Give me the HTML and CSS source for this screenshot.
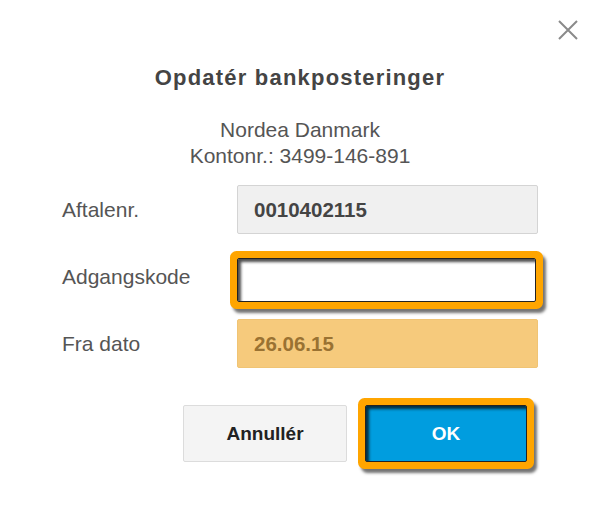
FILE: index.html
```html
<!DOCTYPE html>
<html lang="da">
<head>
    <meta charset="UTF-8">
    <meta name="viewport" content="width=device-width, initial-scale=1.0">
    <title>Opdatér bankposteringer</title>
    <link rel="stylesheet" href="styles.css">
</head>
<body>
    <div class="dialog">
        <div class="dialog-top">
            <button class="close" type="button" aria-label="Luk">
                <svg width="20" height="20" viewBox="0 0 20 20">
                    <path d="M1 1 L19 19 M19 1 L1 19" stroke="#8a8a8a" stroke-width="2" fill="none"/>
                </svg>
            </button>
        </div>

        <h1 class="title">Opdatér bankposteringer</h1>

        <div class="bank">
            <div>Nordea Danmark</div>
            <div>Kontonr.: 3499-146-891</div>
        </div>

        <form class="fields">
            <label for="aftale">Aftalenr.</label>
            <div class="field readonly" id="aftale">0010402115</div>

            <label for="kode">Adgangskode</label>
            <input class="field focus" type="password" id="kode">

            <label for="dato">Fra dato</label>
            <div class="field date" id="dato">26.06.15</div>
        </form>

        <div class="actions">
            <button class="btn cancel" type="button">Annullér</button>
            <button class="btn ok focus" type="button">OK</button>
        </div>
    </div>
</body>
</html>
```

FILE: styles.css
```css
body {
    margin: 0;
    font-family: 'Liberation Sans', Arial, sans-serif;
    background: #fff;
    color: #555;
}

.dialog {
    width: 600px;
    height: 507px;
    box-sizing: border-box;
    padding-top: 20px;
}

.dialog-top {
    display: flex;
    justify-content: flex-end;
    padding-right: 22px;
}

.close {
    width: 20px;
    height: 20px;
    padding: 0;
    border: none;
    background: none;
    cursor: pointer;
}

.title {
    margin: 26px 0 0;
    text-align: center;
    font-size: 22px;
    line-height: 24px;
    letter-spacing: 1.2px;
    font-weight: bold;
    color: #444;
}

.bank {
    margin-top: 27px;
    text-align: center;
    font-size: 21px;
    line-height: 26px;
    color: #555;
}

.fields {
    margin-top: 16px;
    padding-left: 62px;
    display: grid;
    grid-template-columns: 175px 301px;
    grid-auto-rows: 49px;
    row-gap: 18px;
    align-items: center;
}

.fields label {
    font-size: 21px;
    color: #555;
}

.field {
    box-sizing: border-box;
    height: 49px;
    padding: 0 16px;
    border: 1px solid #d4d4d4;
    border-radius: 2px;
    font-family: inherit;
    font-size: 20.5px;
    font-weight: bold;
    display: flex;
    align-items: center;
}

.readonly {
    background: #f0f0f0;
    color: #444;
}

.date {
    background: #f6ca7c;
    border-color: #f0c474;
    color: #9a7232;
}

input.field {
    background: #fff;
    width: 299px;
    height: 44px;
    align-self: start;
    margin-top: 6px;
}

.focus {
    border: 1px solid #222;
    box-shadow: inset 3px 3px 3px rgba(0, 0, 0, 0.7),
                0 0 0 7px #ffa500,
                3px 4px 3px 7px rgba(0, 0, 0, 0.55);
    outline: none;
}

.actions {
    margin-top: 37px;
    display: flex;
    justify-content: flex-end;
    gap: 18px;
    padding-right: 73px;
}

.btn {
    width: 164px;
    height: 57px;
    border-radius: 2px;
    font-family: inherit;
    font-size: 19px;
    font-weight: bold;
    cursor: pointer;
}

.cancel {
    background: #f4f4f4;
    border: 1px solid #dcdcdc;
    color: #222;
}

.ok {
    width: 162px;
    background: #009ddf;
    color: #fff;
}
```
